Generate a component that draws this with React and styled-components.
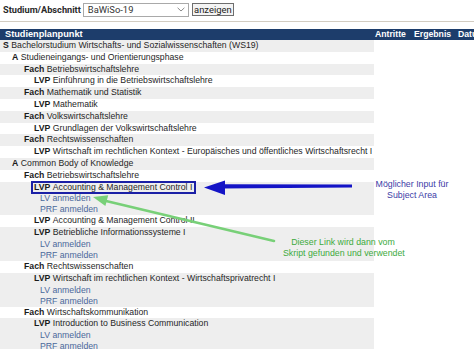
import React from "react";
import styled, { createGlobalStyle } from "styled-components";

const Global = createGlobalStyle`
  html, body { margin: 0; padding: 0; background: #fff; }
  body {
    width: 474px; height: 349px; overflow: hidden; position: relative;
    font-family: "Liberation Sans", Arial, sans-serif; color: #1e1e1e;
  }
`;

const Page = styled.div`
  position: relative;
  width: 474px;
  height: 349px;
  overflow: hidden;
`;

const TopBar = styled.div`
  display: flex;
  align-items: center;
  height: 15px;
  padding: 2px 0 0 3px;
`;

const TopLabel = styled.span`
  font-family: Roboto, "Liberation Sans", sans-serif;
  font-weight: 700;
  font-size: 9.2px;
  color: #2a2a2a;
  margin-right: 2px;
`;

const SelectBox = styled.div`
  box-sizing: border-box;
  width: 106px;
  height: 14px;
  border: 1px solid #a9a9a9;
  display: flex;
  align-items: center;
  justify-content: space-between;
  padding: 0 3px 0 4px;
  font-family: Roboto, "Liberation Sans", sans-serif;
  font-size: 9.4px;
  color: #333;
  background: #fff;
`;

const Button = styled.div`
  box-sizing: border-box;
  width: 42px;
  height: 13px;
  margin-left: 3px;
  border: 1px solid #6e6e6e;
  background: #f4f4f4;
  display: flex;
  align-items: center;
  justify-content: center;
  font-family: Roboto, "Liberation Sans", sans-serif;
  font-size: 9.4px;
  color: #222;
`;

const Divider = styled.div`
  height: 1px;
  margin-top: 4px;
  background: #d3cdc2;
`;

const Table = styled.table`
  margin-top: 7px;
  border-collapse: collapse;
  border-spacing: 0;
  table-layout: fixed;
  width: 500px;
  font-size: 8.7px;
`;

const HeadRow = styled.tr`
  background: #1d3d6b;
  height: 11px;
`;

const HeadCell = styled.th`
  box-sizing: border-box;
  width: ${(p) => p.$w}px;
  padding: 0 0 0 ${(p) => p.$pad}px;
  text-align: left;
  color: #fff;
  font-weight: 700;
  font-size: ${(p) => (p.$big ? 9.2 : 8.7)}px;
  line-height: 11px;
  height: 11px;
  white-space: nowrap;
  overflow: hidden;
`;

const ItemCell = styled.td`
  box-sizing: border-box;
  padding: 0;
  background: ${(p) => (p.$shade ? "#eeeeee" : "#ffffff")};
  vertical-align: top;
  white-space: nowrap;
`;

const EmptyCell = styled.td`
  padding: 0;
`;

const Line = styled.div`
  height: 11.8px;
  line-height: 11.8px;
  padding-left: ${(p) => p.$indent}px;
  display: flex;
  align-items: center;
`;

const Prefix = styled.b`
  font-weight: 700;
  margin-right: 2.5px;
  color: #1a1a1a;
`;

const Label = styled.span`
  color: #262626;
`;

const Marked = styled.span`
  display: inline-flex;
  align-items: center;
  height: 8.5px;
  border: 2px solid #1b20a6;
  padding: 0 2px 0 1px;
  margin-left: -3px;
`;

const LinkLine = styled.div`
  height: 11px;
  line-height: 11px;
  padding-left: 40px;
  color: #4a689b;
`;

const Overlay = styled.div`
  position: absolute;
  left: 0;
  top: 0;
  width: 474px;
  height: 349px;
  pointer-events: none;
`;

const ArrowLayer = styled.svg`
  position: absolute;
  left: 0;
  top: 0;
`;

const Note = styled.div`
  position: absolute;
  left: ${(p) => p.$x}px;
  top: ${(p) => p.$y}px;
  width: ${(p) => p.$w}px;
  text-align: center;
  font-size: 8.8px;
  line-height: 11px;
  color: ${(p) => p.$color};
  white-space: nowrap;
`;

const rows = [
  { t: "S", label: "Bachelorstudium Wirtschafts- und Sozialwissenschaften (WS19)", indent: 3 },
  { t: "A", label: "Studieneingangs- und Orientierungsphase", indent: 12 },
  { t: "Fach", label: "Betriebswirtschaftslehre", indent: 24 },
  { t: "LVP", label: "Einführung in die Betriebswirtschaftslehre", indent: 34 },
  { t: "Fach", label: "Mathematik und Statistik", indent: 24 },
  { t: "LVP", label: "Mathematik", indent: 34 },
  { t: "Fach", label: "Volkswirtschaftslehre", indent: 24 },
  { t: "LVP", label: "Grundlagen der Volkswirtschaftslehre", indent: 34 },
  { t: "Fach", label: "Rechtswissenschaften", indent: 24 },
  { t: "LVP", label: "Wirtschaft im rechtlichen Kontext - Europäisches und öffentliches Wirtschaftsrecht I", indent: 34 },
  { t: "A", label: "Common Body of Knowledge", indent: 12 },
  { t: "Fach", label: "Betriebswirtschaftslehre", indent: 24 },
  { t: "LVP", label: "Accounting & Management Control I", indent: 34, links: true, marked: true },
  { t: "LVP", label: "Accounting & Management Control II", indent: 34 },
  { t: "LVP", label: "Betriebliche Informationssysteme I", indent: 34, links: true },
  { t: "Fach", label: "Rechtswissenschaften", indent: 24 },
  { t: "LVP", label: "Wirtschaft im rechtlichen Kontext - Wirtschaftsprivatrecht I", indent: 34, links: true },
  { t: "Fach", label: "Wirtschaftskommunikation", indent: 24 },
  { t: "LVP", label: "Introduction to Business Communication", indent: 34, links: true },
];

function Chevron() {
  return (
    <svg width="8" height="5" viewBox="0 0 8 5">
      <path d="M0.6 0.8 L4 4 L7.4 0.8" fill="none" stroke="#8a8a8a" strokeWidth="1" />
    </svg>
  );
}

function Arrows() {
  return (
    <ArrowLayer width="474" height="349" viewBox="0 0 474 349">
      <polygon points="222,184.2 352,184.6 352,187.4 222,188.4" fill="#1414c6" />
      <polygon points="204,187.6 225,180.5 225,195" fill="#1414c6" />
      <line x1="104" y1="200.5" x2="274" y2="241" stroke="#78d078" strokeWidth="2.6" strokeLinecap="round" />
      <polygon points="93,197 108.2,195.2 105.4,206" fill="#78d078" />
    </ArrowLayer>
  );
}

export default function App() {
  return (
    <Page>
      <Global />
      <TopBar>
        <TopLabel>Studium/Abschnitt</TopLabel>
        <SelectBox>
          <span>BaWiSo-19</span>
          <Chevron />
        </SelectBox>
        <Button>anzeigen</Button>
      </TopBar>
      <Divider />
      <Table>
        <thead>
          <HeadRow>
            <HeadCell $w={374} $pad={5} $big>Studienplanpunkt</HeadCell>
            <HeadCell $w={38} $pad={1}>Antritte</HeadCell>
            <HeadCell $w={41} $pad={2}>Ergebnis</HeadCell>
            <HeadCell $w={47} $pad={5}>Datum</HeadCell>
          </HeadRow>
        </thead>
        <tbody>
          {rows.map((r, i) => (
            <tr key={i}>
              <ItemCell $shade={i % 2 === 0}>
                <Line $indent={r.indent}>
                  {r.marked ? (
                    <Marked>
                      <Prefix>{r.t}</Prefix>
                      <Label>{r.label}</Label>
                    </Marked>
                  ) : (
                    <>
                      <Prefix>{r.t}</Prefix>
                      <Label>{r.label}</Label>
                    </>
                  )}
                </Line>
                {r.links && (
                  <>
                    <LinkLine>LV anmelden</LinkLine>
                    <LinkLine>PRF anmelden</LinkLine>
                  </>
                )}
              </ItemCell>
              <EmptyCell />
              <EmptyCell />
              <EmptyCell />
            </tr>
          ))}
        </tbody>
      </Table>
      <Overlay>
        <Arrows />
        <Note $x={362} $y={179} $w={100} $color="#3c3ca6">
          Möglicher Input für
          <br />
          Subject Area
        </Note>
        <Note $x={283} $y={237} $w={120} $color="#3daa3d">
          Dieser Link wird dann vom
          <br />
          Skript gefunden und verwendet
        </Note>
      </Overlay>
    </Page>
  );
}
